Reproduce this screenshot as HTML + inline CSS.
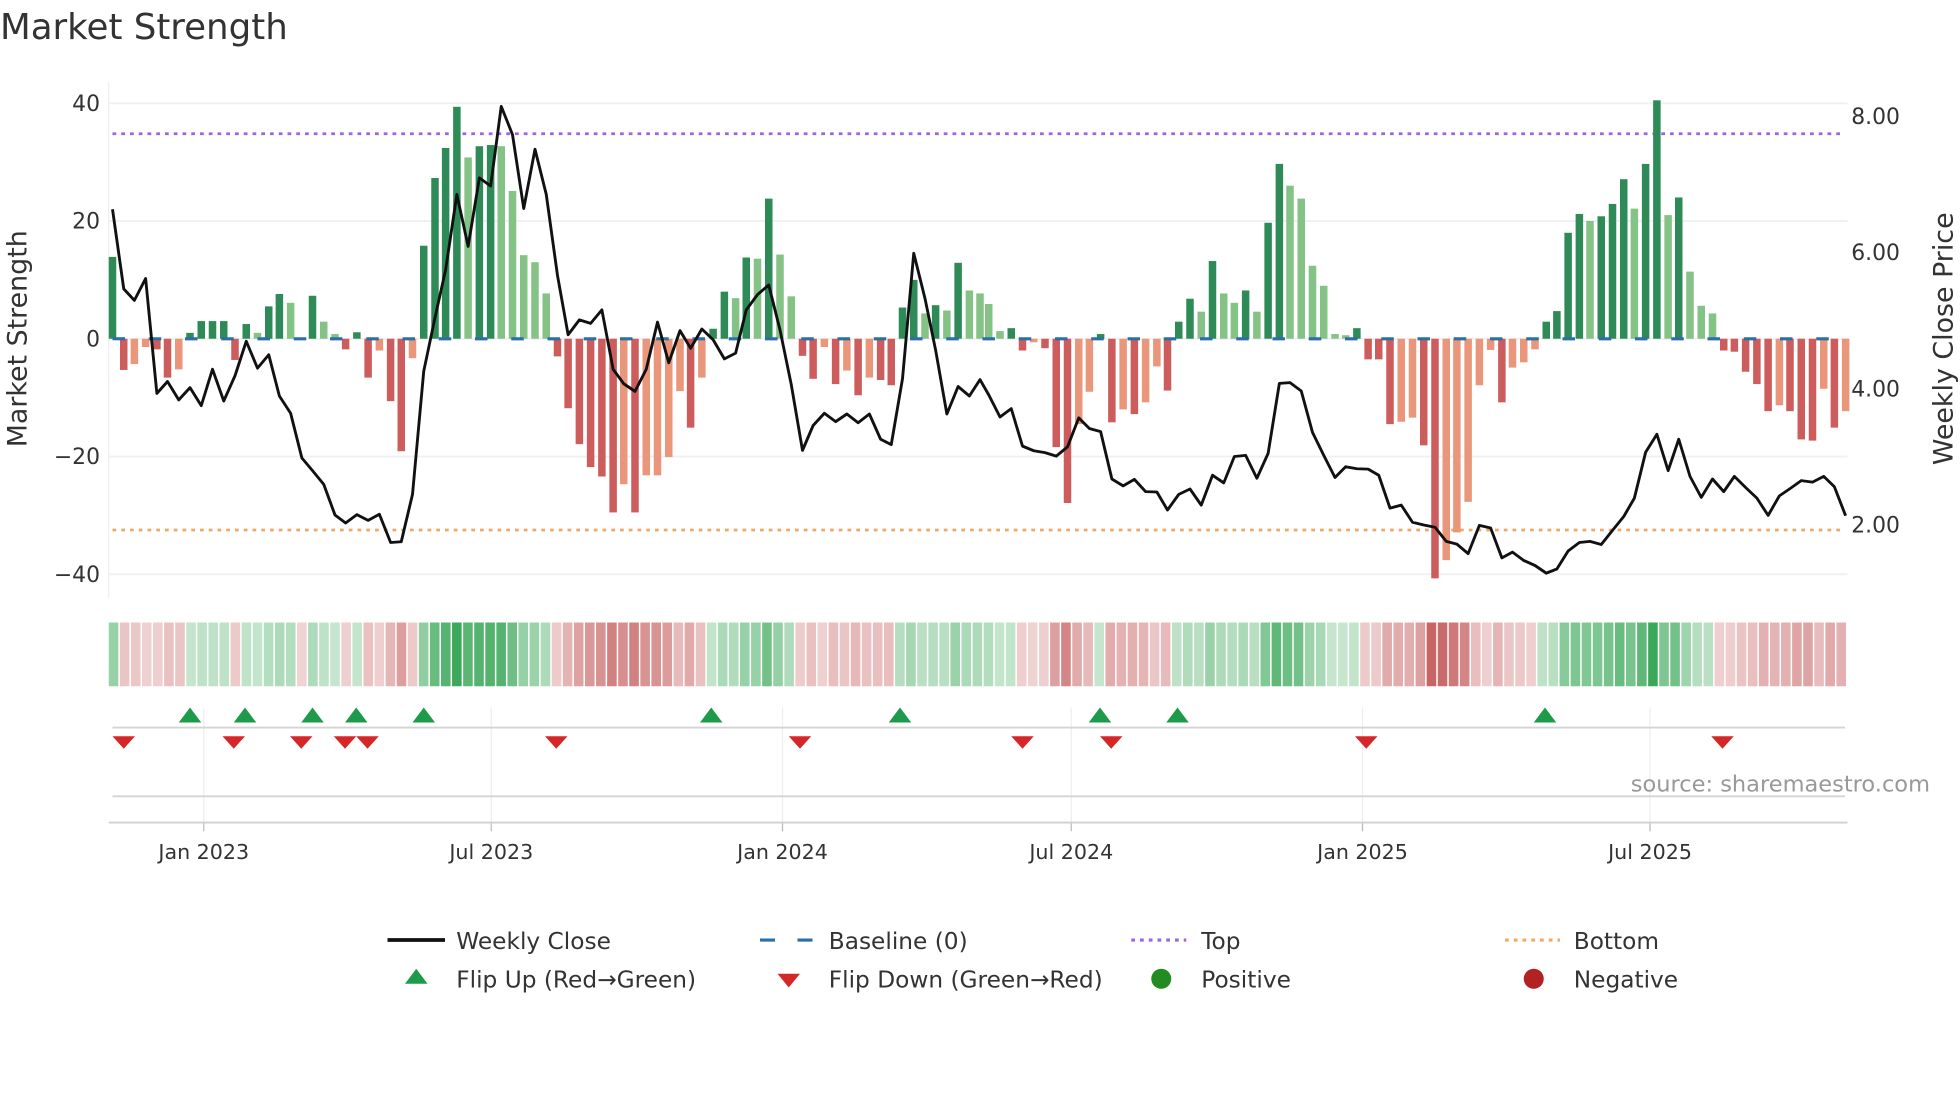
<!DOCTYPE html>
<html><head><meta charset="utf-8">
<style>
html,body{margin:0;padding:0;background:#fff;width:1960px;height:1102px;overflow:hidden}
svg{display:block}
text{font-family:"DejaVu Sans","Liberation Sans",sans-serif}
</style></head>
<body>
<svg id="s" width="1960" height="1102" viewBox="0 0 1568 881.6" xmlns="http://www.w3.org/2000/svg">
<text x="0" y="31" font-size="28.5" fill="#333">Market Strength</text>
</svg>
<script>
const NS="http://www.w3.org/2000/svg";
const s=document.getElementById('s');
function el(t,a,txt){const e=document.createElementNS(NS,t);for(const k in a)e.setAttribute(k,a[k]);if(txt!==undefined)e.textContent=txt;s.appendChild(e);return e;}
const Y0=271,K=4.71;
function vy(v){return Y0-v*K;}
[40,20,0,-20,-40].forEach(v=>{el('line',{x1:87,x2:1478,y1:vy(v),y2:vy(v),stroke:'#eef0f3','stroke-width':1.5});
 el('text',{x:80,y:vy(v)+6,'font-size':17.5,fill:'#333','text-anchor':'end'},v<0?'\u2212'+(-v):String(v));});
el('line',{x1:87,x2:87,y1:66,y2:478,stroke:'#eceff2','stroke-width':1});
[[8,'8.00'],[6,'6.00'],[4,'4.00'],[2,'2.00']].forEach(p=>{const y=420-(p[0]-2)*54.5;el('text',{x:1481,y:y+6,'font-size':17.5,fill:'#333'},p[1]);});
el('text',{x:0,y:0,'font-size':21.5,fill:'#333','text-anchor':'middle',transform:'translate(21,271) rotate(-90)'},'Market Strength');
el('text',{x:0,y:0,'font-size':21.5,fill:'#333','text-anchor':'middle',transform:'translate(1562,271) rotate(-90)'},'Weekly Close Price');
const C={D:'#2e8b57',L:'#85c285',R:'#cd5c5c',S:'#e9967a'};
const b1=[[180,13.9,'D'],[198,-5.3,'R'],[215,-4.3,'S'],[233,-1.4,'S'],[251,-1.8,'R'],[268,-6.6,'R'],[286,-5.2,'S'],[304,1,'D'],[322,3,'D'],[340,3,'D'],[358,3,'D'],[376,-3.6,'R'],[394,2.5,'D'],[412,1,'L'],[430,5.5,'D'],[447,7.6,'D'],[465,6.1,'L'],[483,-0.2,'D'],[500,7.3,'D'],[518,2.9,'L'],[536,0.8,'L'],[553,-1.8,'R'],[571,1.1,'D'],[589,-6.6,'R'],[607,-2,'S'],[625,-10.6,'R'],[642,-19.1,'R'],[660,-3.3,'S'],[678,15.8,'D'],[696,27.3,'D'],[713,32.4,'D'],[731,39.4,'D'],[749,30.8,'L'],[767,32.7,'D'],[785,32.9,'D'],[802,32.7,'L'],[820,25.1,'L'],[838,14.2,'L'],[856,13,'L'],[874,7.7,'L'],[892,-3,'R'],[909,-11.8,'R'],[927,-17.9,'R'],[945,-21.8,'R'],[963,-23.4,'R'],[981,-29.5,'R'],[998,-24.7,'S'],[1016,-29.5,'R'],[1034,-23.2,'S'],[1052,-23.2,'S'],[1070,-20.1,'S'],[1088,-8.9,'S'],[1105,-15.1,'R'],[1123,-6.6,'S'],[1141,1.7,'D'],[1159,8,'D'],[1177,6.9,'L'],[1194,13.8,'D'],[1212,13.6,'L'],[1230,23.8,'D'],[1248,14.3,'L'],[1266,7.2,'L'],[1284,-2.9,'R'],[1301,-6.8,'R'],[1319,-1.4,'S'],[1337,-7.7,'R'],[1355,-5.4,'S'],[1373,-9.6,'R'],[1391,-6.6,'S'],[1409,-7,'R'],[1426,-7.9,'R'],[1444,5.3,'D'],[1462,10,'D'],[1480,4.3,'L'],[1497,5.7,'D'],[1515,4.8,'L'],[1533,12.9,'D'],[1551,8.2,'L'],[1568,7.7,'L']];
const b2=[[14,5.9,'L'],[32,1.3,'L'],[50,1.8,'D'],[68,-2,'R'],[86,-0.6,'S'],[104,-1.6,'R'],[122,-18.4,'R'],[140,-27.9,'R'],[158,-14.5,'S'],[175,-9,'S'],[193,0.8,'D'],[211,-14.2,'R'],[229,-12,'S'],[247,-12.8,'R'],[265,-10.8,'S'],[283,-4.7,'S'],[300,-8.8,'R'],[318,2.9,'D'],[336,6.8,'D'],[354,4.6,'L'],[372,13.2,'D'],[390,7.7,'L'],[407,6.1,'L'],[425,8.2,'D'],[443,4.6,'L'],[461,19.7,'D'],[479,29.7,'D'],[496,26,'L'],[514,23.8,'L'],[532,12.4,'L'],[550,9,'L'],[568,0.8,'L'],[585,0.6,'L'],[603,1.8,'D'],[621,-3.5,'R'],[638,-3.5,'R'],[656,-14.5,'R'],[674,-14.1,'S'],[692,-13.4,'S'],[710,-18.1,'R'],[728,-40.7,'R'],[746,-37.6,'S'],[763,-32.9,'S'],[781,-27.7,'S'],[799,-7.9,'S'],[817,-1.9,'S'],[835,-10.8,'R'],[852,-4.9,'S'],[870,-4,'S'],[888,-1.8,'S'],[906,2.9,'D'],[923,4.7,'D'],[941,18,'D'],[959,21.2,'D'],[976,20,'L'],[994,20.8,'D'],[1012,22.9,'D'],[1030,27.1,'D'],[1047,22.1,'L'],[1065,29.7,'D'],[1083,40.5,'D'],[1101,21,'L'],[1118,24,'D'],[1136,11.4,'L'],[1154,5.6,'L'],[1172,4.3,'L'],[1190,-2,'R'],[1207,-2.2,'R'],[1225,-5.6,'R'],[1243,-7.7,'R'],[1261,-12.3,'R'],[1279,-11.3,'S'],[1296,-12.3,'R'],[1314,-17.1,'R'],[1332,-17.3,'R'],[1350,-8.5,'S'],[1367,-15.1,'R'],[1385,-12.3,'S']];
const bars=b1.map(b=>[b[0]/2,b[1],b[2]]).concat(b2.map(b=>[784+b[0]/2,b[1],b[2]]));
el('line',{x1:90,x2:1476,y1:107,y2:107,stroke:'#9966dd','stroke-width':2.2,'stroke-dasharray':'3,4'});
el('line',{x1:90,x2:1476,y1:424,y2:424,stroke:'#f0a868','stroke-width':2.2,'stroke-dasharray':'3,4'});
bars.forEach(b=>{const y=vy(b[1]);el('rect',{x:b[0]-3,y:Math.min(y,Y0),width:6,height:Math.max(Math.abs(Y0-y),0.8),fill:C[b[2]]});});
el('line',{x1:90,x2:1476,y1:Y0,y2:Y0,stroke:'#2b6fa8','stroke-width':2.5,'stroke-dasharray':'10,19'});
const p1=[[180,547],[198,755],[215,785],[233,728],[251,1028],[268,997],[286,1045],[304,1013],[322,1060],[340,965],[358,1048],[376,982],[394,892],[412,962],[430,927],[447,1035],[465,1080],[483,1197],[500,1230],[518,1266],[536,1346],[553,1367],[571,1345],[589,1360],[607,1344],[625,1418],[642,1416],[660,1292],[678,970],[696,830],[713,705],[731,508],[749,644],[767,465],[785,486],[802,278],[820,352],[838,545],[856,390],[874,508],[892,720],[909,875],[927,836],[945,845],[963,810],[981,965],[998,1003],[1016,1023],[1034,965],[1052,842],[1070,948],[1088,864],[1105,910],[1123,860],[1141,888],[1159,938],[1177,923],[1194,810],[1212,770],[1230,745],[1248,862],[1266,1005],[1284,1177],[1301,1112],[1319,1080],[1337,1102],[1355,1082],[1373,1105],[1391,1082],[1409,1148],[1426,1162],[1444,990],[1462,662],[1480,780],[1497,915],[1515,1082],[1533,1010],[1551,1035],[1568,992]];
const p2=[[14,1032],[32,1090],[50,1068],[68,1166],[86,1178],[104,1183],[122,1192],[140,1168],[158,1092],[175,1120],[193,1128],[211,1252],[229,1270],[247,1253],[265,1285],[283,1286],[300,1333],[318,1292],[336,1278],[354,1320],[372,1242],[390,1262],[407,1193],[425,1190],[443,1250],[461,1185],[479,1002],[496,1000],[514,1022],[532,1130],[550,1190],[568,1248],[585,1220],[603,1225],[621,1226],[638,1242],[656,1328],[674,1320],[692,1365],[710,1372],[728,1378],[746,1415],[763,1422],[781,1447],[799,1373],[817,1380],[835,1458],[852,1443],[870,1465],[888,1478],[906,1498],[923,1487],[941,1440],[959,1418],[976,1415],[994,1423],[1012,1386],[1030,1350],[1047,1302],[1065,1182],[1083,1135],[1101,1230],[1118,1148],[1136,1245],[1154,1300],[1172,1252],[1190,1285],[1207,1245],[1225,1274],[1243,1302],[1261,1347],[1279,1296],[1296,1277],[1314,1256],[1332,1260],[1350,1245],[1367,1272],[1385,1348]];
const pts=p1.map(p=>[p[0]/2,p[1]*0.3061]).concat(p2.map(p=>[784+p[0]/2,p[1]*0.3061]));
el('polyline',{points:pts.map(p=>p[0].toFixed(1)+','+p[1].toFixed(1)).join(' '),fill:'none',stroke:'#111','stroke-width':2.3,'stroke-linejoin':'round'});
const cellW=(1478-87)/bars.length;
bars.forEach((b,i)=>{const a=0.28+0.72*Math.min(Math.abs(b[1])/40,1);
 const base=b[1]>=0?[58,168,88]:[200,100,100];
 const c=base.map(v=>Math.round(255-(255-v)*a));
 el('rect',{x:87+i*cellW,y:498,width:cellW-1.2,height:51,fill:'rgb('+c.join(',')+')'});});
const months=[[163,'Jan 2023'],[393,'Jul 2023'],[626,'Jan 2024'],[857,'Jul 2024'],[1090,'Jan 2025'],[1320,'Jul 2025']];
months.forEach(m=>{el('line',{x1:m[0],x2:m[0],y1:566,y2:658,stroke:'#eceef1','stroke-width':1});
 el('line',{x1:m[0],x2:m[0],y1:658,y2:665,stroke:'#bbb','stroke-width':1});
 el('text',{x:m[0],y:687,'font-size':16.5,fill:'#333','text-anchor':'middle'},m[1]);});
el('line',{x1:90,x2:1476,y1:582,y2:582,stroke:'#d4d4d4','stroke-width':1.5});
el('line',{x1:90,x2:1476,y1:637,y2:637,stroke:'#d4d4d4','stroke-width':1.5});
el('line',{x1:87,x2:1478,y1:658,y2:658,stroke:'#d0d0d0','stroke-width':1.5});
[152,196,250,285,339,569,720,880,942,1236].forEach(x=>el('polygon',{points:`${x-9},578 ${x+9},578 ${x},566`,fill:'#1e9b4a'}));
[99,187,241,276,294,445,640,818,889,1093,1378].forEach(x=>el('polygon',{points:`${x-9},589 ${x+9},589 ${x},599`,fill:'#d62728'}));
el('text',{x:1544,y:633,'font-size':18,fill:'#999','text-anchor':'end'},'source: sharemaestro.com');
const lt={'font-size':18.6,fill:'#333'};
el('line',{x1:310,x2:356,y1:752,y2:752,stroke:'#111','stroke-width':3});
el('text',Object.assign({x:365,y:759},lt),'Weekly Close');
el('line',{x1:608,x2:652,y1:752,y2:752,stroke:'#2b6fa8','stroke-width':2.5,'stroke-dasharray':'12,18'});
el('text',Object.assign({x:663,y:759},lt),'Baseline (0)');
el('line',{x1:905,x2:949,y1:752,y2:752,stroke:'#9966dd','stroke-width':2.5,'stroke-dasharray':'3,4'});
el('text',Object.assign({x:961,y:759},lt),'Top');
el('line',{x1:1204,x2:1248,y1:752,y2:752,stroke:'#f0a868','stroke-width':2.5,'stroke-dasharray':'3,4'});
el('text',Object.assign({x:1259,y:759},lt),'Bottom');
el('polygon',{points:'324,787 342,787 333,775',fill:'#1e9b4a'});
el('text',Object.assign({x:365,y:790},lt),'Flip Up (Red\u2192Green)');
el('polygon',{points:'622,779 640,779 631,790',fill:'#d62728'});
el('text',Object.assign({x:663,y:790},lt),'Flip Down (Green\u2192Red)');
el('circle',{cx:929,cy:783,r:8,fill:'#228b22'});
el('text',Object.assign({x:961,y:790},lt),'Positive');
el('circle',{cx:1227,cy:783,r:8,fill:'#b22222'});
el('text',Object.assign({x:1259,y:790},lt),'Negative');
</script>
</body></html>
